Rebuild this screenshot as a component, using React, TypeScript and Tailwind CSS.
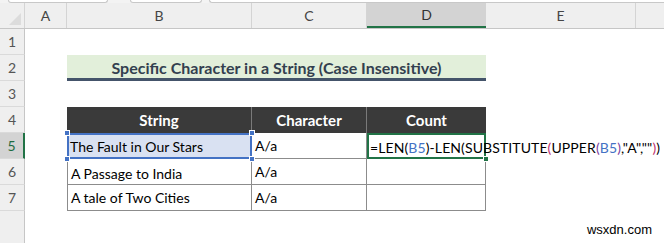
import React from "react";

const font = { fontFamily: "Lato, 'Open Sans', sans-serif" };

const RowHead = ({ n, active }: { n?: number; active?: boolean }) => (
    <div
        className={`w-[25px] shrink-0 h-full flex items-center justify-center text-[14px] border-b border-[#dadada] ${
            active ? "bg-[#d3d3d3] text-[#1e6b41] border-r-2 border-r-[#217346]" : "bg-[#efefef] text-[#555] border-r border-r-[#c6c6c6]"
        }`}
    >
        {n}
    </div>
);

const Handle = ({ className }: { className: string }) => (
    <div className={`absolute w-[6px] h-[6px] bg-[#4472c4] border border-white ${className}`} />
);

export default function App() {
    return (
        <div className="w-[664px] h-[243px] bg-white overflow-hidden flex flex-col" style={font}>
            {/* toolbar remnant */}
            <div className="h-[3px] bg-[#f3f3f3] flex">
                <div className="ml-[8px] w-[100px] h-[3px] bg-white border border-t-0 border-[#c8c8c8] rounded-b-[3px]" />
                <div className="ml-[22px] w-[72px] h-[3px] bg-white border border-t-0 border-[#c8c8c8] rounded-b-[3px]" />
                <div className="ml-[7px] flex-1 h-[3px] bg-white border border-t-0 border-r-0 border-[#c8c8c8] rounded-bl-[3px]" />
            </div>

            {/* column headers */}
            <div className="h-[26px] flex bg-[#efefef] border-b border-[#c6c6c6] text-[14px] text-[#444]">
                <div className="w-[25px] shrink-0 relative border-r border-[#d4d4d4]">
                    <div className="absolute right-[3px] bottom-[3px] w-0 h-0 border-l-[12px] border-l-transparent border-b-[12px] border-b-[#dcdcdc]" />
                </div>
                <div className="w-[42px] shrink-0 flex items-center justify-center border-r border-[#d4d4d4]">A</div>
                <div className="w-[185px] shrink-0 flex items-center justify-center border-r border-[#d4d4d4]">B</div>
                <div className="w-[115px] shrink-0 flex items-center justify-center border-r border-[#d4d4d4]">C</div>
                <div className="w-[119px] shrink-0 flex items-center justify-center bg-[#d3d3d3] border-b-2 border-[#217346] text-[#333]">D</div>
                <div className="w-[150px] shrink-0 flex items-center justify-center border-r border-[#d4d4d4]">E</div>
                <div className="flex-1" />
            </div>

            {/* row 1 */}
            <div className="h-[26px] flex">
                <RowHead n={1} />
            </div>

            {/* row 2 title */}
            <div className="h-[26px] flex">
                <RowHead n={2} />
                <div className="w-[42px] shrink-0" />
                <div className="w-[419px] shrink-0 bg-[#e2efda] border-b-[3px] border-[#44546a] flex items-center justify-center pt-[2px] font-bold text-[16px] text-[#333f4f]">
                    Specific Character in a String (Case Insensitive)
                </div>
            </div>

            {/* row 3 */}
            <div className="h-[26px] flex">
                <RowHead n={3} />
            </div>

            {/* row 4 header */}
            <div className="h-[26px] flex">
                <RowHead n={4} />
                <div className="w-[42px] shrink-0" />
                <div className="w-[185px] shrink-0 bg-[#3a3a3a] border-r border-[#7a7a7a] text-white font-bold text-[15px] flex items-center justify-center">String</div>
                <div className="w-[115px] shrink-0 bg-[#3a3a3a] border-r border-[#7a7a7a] text-white font-bold text-[15px] flex items-center justify-center">Character</div>
                <div className="w-[119px] shrink-0 bg-[#3a3a3a] text-white font-bold text-[15px] flex items-center justify-center">Count</div>
            </div>

            {/* row 5 */}
            <div className="h-[26px] flex text-[14px] text-black">
                <RowHead n={5} active />
                <div className="w-[42px] shrink-0" />
                <div className="w-[185px] shrink-0 relative bg-[#d9e1f2] flex items-center pl-[3px]">
                    <div className="absolute inset-0 border-2 border-[#4472c4]" />
                    <Handle className="-left-[3px] -top-[3px]" />
                    <Handle className="-right-[3px] -top-[3px]" />
                    <Handle className="-left-[3px] -bottom-[3px]" />
                    <Handle className="-right-[3px] -bottom-[3px]" />
                    <span className="relative">The Fault in Our Stars</span>
                </div>
                <div className="w-[115px] shrink-0 border-b border-r border-[#8c8c8c] flex items-center pl-[3px]">A/a</div>
                <div className="w-[119px] shrink-0 relative flex items-center pl-[3px] pt-[2px] whitespace-nowrap">
                    <div className="absolute inset-0 border-2 border-[#217346]" />
                    <div className="absolute -right-[3px] -bottom-[3px] w-[6px] h-[6px] bg-[#217346] border border-white" />
                    <span className="relative tracking-[0.1px]">
                        =LEN(<span className="text-[#4472c4]">B5</span>)-LEN(SUBSTITUTE<span className="text-[#c0306f]">(</span>UPPER<span className="text-[#7b3fa0]">(</span>
                        <span className="text-[#4472c4]">B5</span>
                        <span className="text-[#7b3fa0]">)</span>,"A",""<span className="text-[#c0306f]">)</span>)
                    </span>
                </div>
            </div>

            {/* row 6 */}
            <div className="h-[26px] flex text-[14px] text-black">
                <RowHead n={6} />
                <div className="w-[42px] shrink-0" />
                <div className="w-[185px] shrink-0 border-l border-r border-b border-[#8c8c8c] flex items-center pl-[3px] pt-[3px]">A Passage to India</div>
                <div className="w-[115px] shrink-0 border-r border-b border-[#8c8c8c] flex items-center pl-[3px]">A/a</div>
                <div className="w-[119px] shrink-0 border-r border-b border-[#8c8c8c]" />
            </div>

            {/* row 7 */}
            <div className="h-[26px] flex text-[14px] text-black">
                <RowHead n={7} />
                <div className="w-[42px] shrink-0" />
                <div className="w-[185px] shrink-0 border-l border-r border-b border-[#8c8c8c] flex items-center pl-[3px]">A tale of Two Cities</div>
                <div className="w-[115px] shrink-0 border-r border-b border-[#8c8c8c] flex items-center pl-[3px]">A/a</div>
                <div className="w-[119px] shrink-0 border-r border-b border-[#8c8c8c]" />
            </div>

            {/* rest */}
            <div className="flex-1 flex">
                <div className="w-[25px] shrink-0 bg-[#efefef] border-r border-[#c6c6c6]" />
                <div className="flex-1 flex justify-end items-end pb-[4px] pr-[12px]">
                    <span className="text-[13px] text-black" style={{ fontFamily: "'Liberation Sans', Arial, sans-serif" }}>wsxdn.com</span>
                </div>
            </div>
        </div>
    );
}
